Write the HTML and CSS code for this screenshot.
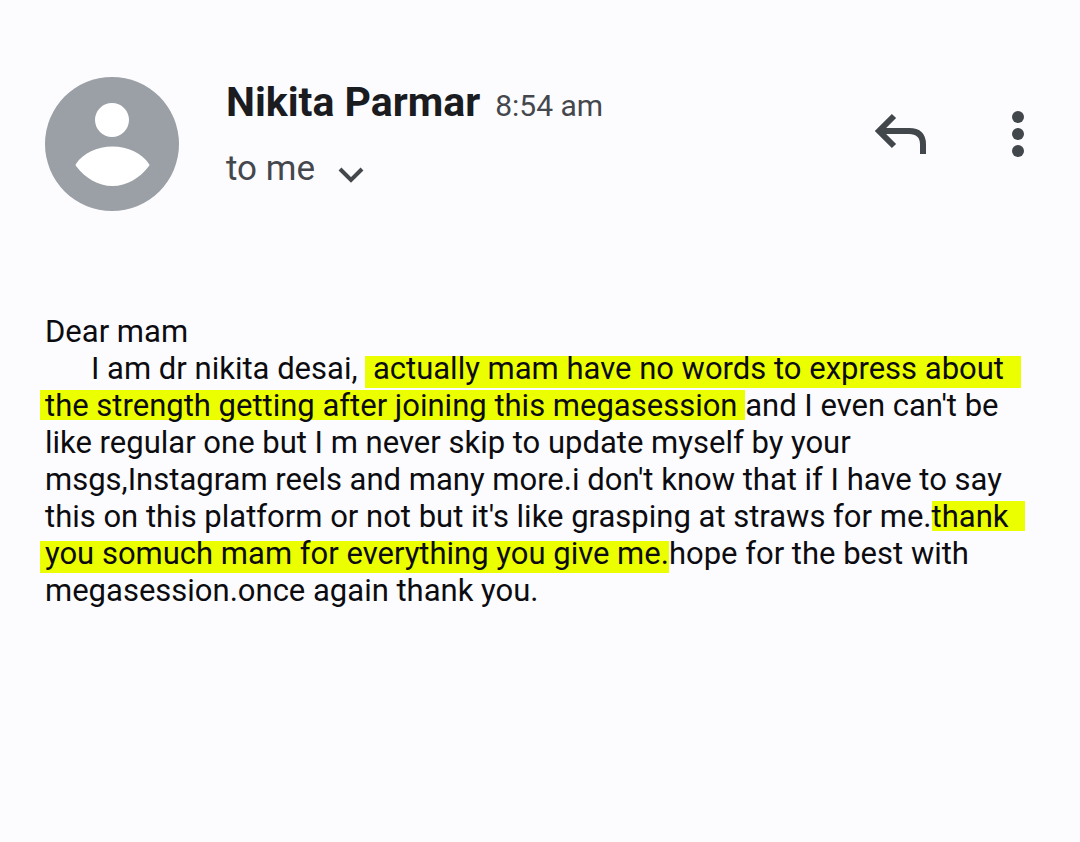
FILE: index.html
```html
<!DOCTYPE html>
<html lang="en">
  <head>
    <meta charset="utf-8">
    <meta name="viewport" content="width=device-width, initial-scale=1">
    <title>Mail from Nikita Parmar</title>
    <link rel="stylesheet" href="styles.css">
  </head>
  <body>
    <main>
      <header class="mail-header">
        <svg class="avatar" viewBox="0 0 134 134" aria-hidden="true">
          <circle cx="67" cy="67" r="67" fill="#9aa0a6"/>
          <circle cx="67" cy="43" r="17" fill="#fff"/>
          <path d="M31 87C38 76 52 69.500 67.500 69.500S97 76 104 87q1 1 0 2c-9 12-22 20-36.500 20S40 101 31 89q-1-1 0-2z" fill="#fff"/>
        </svg>
        <div class="sender">
          <div class="sender-line">
            <h1 class="sender-name">Nikita Parmar</h1>
            <time class="sent-time">8:54 am</time>
          </div>
          <button class="recipient" type="button">
            to me
            <svg class="chevron" viewBox="0 0 28 18" aria-hidden="true">
              <path d="M3 3l11 11L25 3"/>
            </svg>
          </button>
        </div>
        <div class="actions">
          <button class="icon-btn" type="button" aria-label="Reply">
            <svg class="reply" viewBox="0 0 52 42" aria-hidden="true">
              <path d="M20 3L5 18l15 15M5 18h30q14 0 14 13.500V41"/>
            </svg>
          </button>
          <button class="icon-btn" type="button" aria-label="More options">
            <svg class="more" viewBox="0 0 12 46" aria-hidden="true">
              <circle cx="6" cy="6" r="6"/>
              <circle cx="6" cy="23" r="6"/>
              <circle cx="6" cy="40" r="6"/>
            </svg>
          </button>
        </div>
      </header>
      <article class="mail-body">
        <p>Dear mam</p>
        <p class="indent">I am dr nikita desai, <mark class="low run-out">&nbsp;actually mam have no words to express about</mark> <mark class="run-in">the strength getting after joining this megasession </mark>and I even can't be like regular one but I m never skip to update myself by your msgs,Instagram reels and many more.i don't know that if I have to say this on this platform or not but it's like grasping at straws for me.<mark class="run-out">thank</mark> <mark class="low run-in">you somuch mam for everything you give me.</mark>hope for the best with megasession.once again thank you.</p>
      </article>
    </main>
  </body>
</html>
```
FILE: styles.css
```css
* {
  box-sizing: border-box;
  margin: 0;
  padding: 0;
}
body {
  background-color: #fcfcff;
  color: #0c0c10;
  font-family: Roboto, "Liberation Sans", sans-serif;
}
main {
  padding: 77px 45px;
}
.mail-header {
  display: flex;
  align-items: flex-start;
}
.avatar {
  flex: none;
  width: 134px;
  height: 134px;
}
.sender {
  flex: 1;
  margin-left: 47px;
}
.sender-line {
  display: flex;
  align-items: baseline;
  gap: 15px;
  line-height: 50px;
}
.sender-name {
  color: #1b1c1f;
  font-size: 41px;
  font-weight: 700;
}
.sent-time {
  color: #44474c;
  font-size: 30px;
}
button {
  border: 0;
  background: none;
  cursor: pointer;
}
.recipient {
  display: flex;
  align-items: center;
  gap: 22px;
  margin-top: 16px;
  color: #44474c;
  font: 35px/44px Roboto, "Liberation Sans", sans-serif;
}
.chevron {
  width: 28px;
  height: 18px;
  margin-top: 12px;
  fill: none;
  stroke: #44474c;
  stroke-width: 4;
}
.actions {
  display: flex;
  align-items: center;
  gap: 86px;
  padding: 34px 11px 0 0;
}
.icon-btn {
  display: flex;
}
.reply {
  width: 52px;
  height: 42px;
  fill: none;
  stroke: #41474b;
  stroke-width: 6;
}
.more {
  width: 12px;
  height: 46px;
  fill: #41474b;
}
.mail-body {
  margin-top: 102px;
  font-size: 31px;
  line-height: 37px;
}
.indent {
  text-indent: 46px;
}
/* marker strokes, a bit shorter than the line box */
mark {
  padding-bottom: 2px;
  background: linear-gradient(#ecff00, #ecff00) 0 3px / 100% 30px no-repeat;
  color: inherit;
}
.low {
  background-position: 0 6px;
  background-size: 100% 32px;
}
.run-out {
  margin-right: -17px;
  padding-right: 17px;
}
.run-in {
  margin-left: -5px;
  padding-left: 5px;
}
```
